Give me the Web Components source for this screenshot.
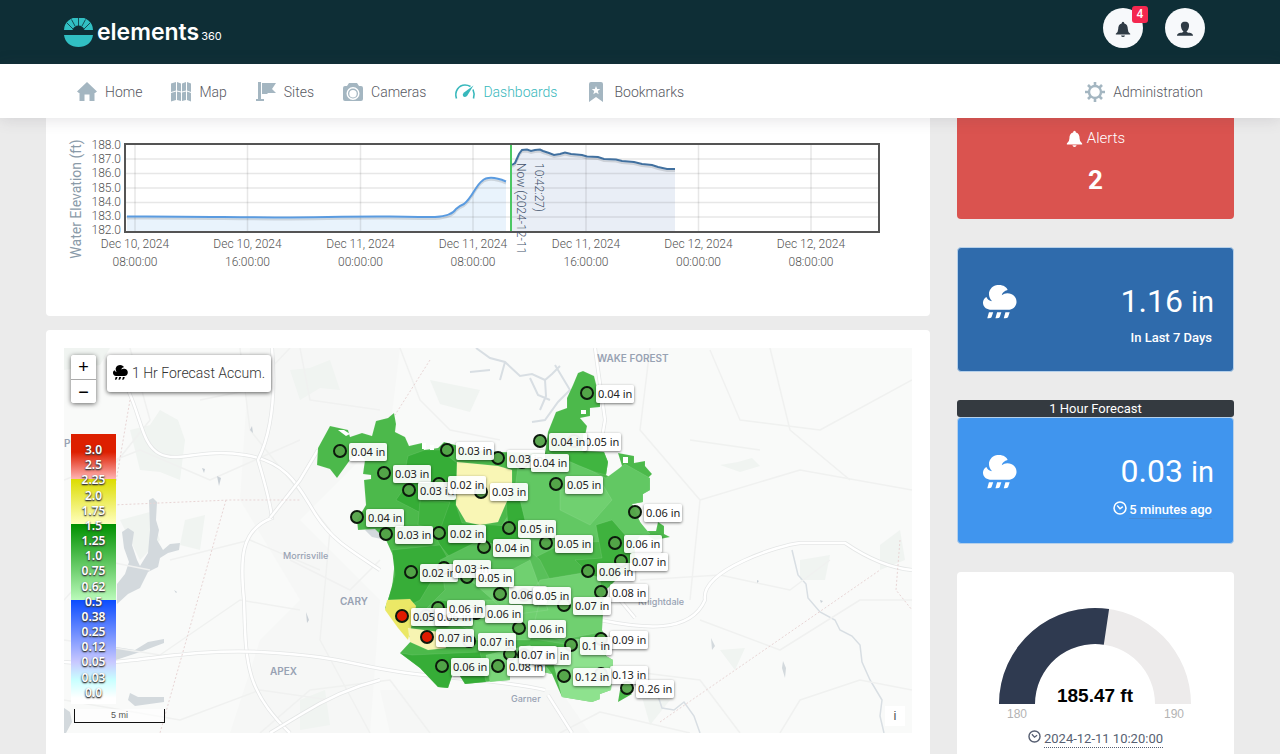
<!DOCTYPE html>
<html lang="en">
<head>
<meta charset="utf-8">
<title>elements360 – Dashboards</title>
<style>
  html, body { margin: 0; height: 100%; }
  body { background: #ebebeb; font-family: Roboto, "Liberation Sans", sans-serif; font-size: 14px; color: #575962; overflow: hidden; }
</style>
</head>
<body>
<e-app></e-app>

<script>
const ICONS = {
  home: '<path d="M10 0 20 9.500 18 11H17.500V19H12.500V12.500H7.500V19H2.500V11H2L0 9.500Z"/>',
  map: '<path d="M0 1.500 5 0V8.500L0 10ZM6 0 10 1.500V9.500L6 8.500ZM11 1.500 15 0V8.500L11 9.500ZM16 0 20 1.500V10L16 8.500ZM0 11 5 9.500V18L0 19.500ZM6 9.500 10 10.500V19L6 18ZM11 10.500 15 9.500V18L11 19ZM16 9.500 20 11V19.500L16 18Z"/>',
  flag: '<path d="M2 0H5V17H8V19H0V17H2ZM6 1H20L16 7 20 11H12L11 12H6Z"/>',
  camera: '<path fill-rule="evenodd" d="M6 1H14L16 4H18Q20 4 20 6V17Q20 19 18 19H2Q0 19 0 17V6Q0 4 2 4H4ZM10 5A6.500 6.500 0 1 0 10 18 6.500 6.500 0 1 0 10 5ZM10 6.500A5 5 0 1 1 10 16.500 5 5 0 1 1 10 6.500ZM10 8A3.700 3.700 0 1 0 10 15.400 3.700 3.700 0 1 0 10 8Z"/>',
  gauge: '<path d="M1.500 16.500C-1 9 4 3 10 3Q13 3 15.500 4.500M18 7.500Q20 12 18.500 16.500" fill="none" stroke="currentColor" stroke-width="1.600"/><path d="M18.500 3.500 12 14Q9.500 16 8 14 7 12 9 10.500Z"/>',
  bookmark: '<path fill-rule="evenodd" d="M5 0H15Q17 0 17 2V20L10 15 3 20V2Q3 0 5 0ZM10 4 8.800 7H5.700L8.200 9 7.300 12.200 10 10.400 12.700 12.200 11.800 9 14.300 7H11.200Z"/>',
  gear: '<circle cx="10" cy="10" r="6" fill="none" stroke="currentColor" stroke-width="2.400"/><path d="M10 0V4M10 16V20M0 10H4M16 10H20M3 3 5.500 5.500M14.500 14.500 17 17M17 3 14.500 5.500M5.500 14.500 3 17" stroke="currentColor" stroke-width="2.600"/>',
  bell: '<path d="M10 1Q11.500 1 11.700 3C15 4 16 6.500 16 10Q16 14 19 16V17H1V16Q4 14 4 10C4 6.500 5 4 8.300 3Q8.500 1 10 1ZM7.500 18H12.500Q12 20 10 20 8 20 7.500 18Z"/>',
  user: '<path d="M10 1C14 1 15.500 3.500 15 7 14.700 10 13 12.500 12 13 12 14 13 14.200 16 14.800 19 15.500 20 17 20 18.500H0C0 17 1 15.500 4 14.800 7 14.200 8 14 8 13 7 12.500 5.300 10 5 7 4.500 3.500 6 1 10 1Z"/>',
  rain: '<path d="M3.500 4.500C4.500 1 7 0 9.500 0 12 0 14 1.300 14.500 3 12.500 3.500 11.500 4.500 11 6Q13 4.500 15.500 5C18.500 5.500 20 8 19.700 10.500 19.300 13 17.500 14.500 15.500 14.500H4C1.500 14.300 0 12.500 0 10.500 0 9 .7 7.700 2 7Q3 9.300 5.300 9.500 3.300 7.500 3.500 4.500ZM3.500 16H6L5 19Q4.500 19.700 2.500 19.500ZM8.300 16H10.800L9.800 19Q9.300 19.700 7.300 19.500ZM13.200 16H15.700L14.700 19Q14.200 19.700 12.200 19.500Z"/>',
  clock: '<circle cx="10" cy="10" r="8.500" fill="none" stroke="currentColor" stroke-width="2.200"/><path d="M6 6.500 10 11 14 8" fill="none" stroke="currentColor" stroke-width="2"/>'
};

function define(name, css, html) {
  customElements.define(name, class extends HTMLElement {
    constructor() {
      super();
      const t = document.createElement('template');
      const markup = typeof html === 'function' ? html(this) : html;
      t.innerHTML = `<style>*{box-sizing:border-box}${css}</style>${markup}`;
      this.attachShadow({ mode: 'open' }).append(t.content.cloneNode(true));
    }
  });
}

/* ---- small parts ---- */
define('e-icon',
  `:host{display:inline-block;width:20px;height:20px;flex:none} svg{display:block;width:100%;height:100%;fill:currentColor;overflow:visible}`,
  h => `<svg viewBox="0 0 20 20" aria-hidden="true">${ICONS[h.getAttribute('name')]}</svg>`);

define('e-logo',
  `:host{display:flex;align-items:center;gap:4px;color:#fff}
   svg{width:29px;height:29px;display:block}
   a{display:flex;align-items:baseline;color:inherit;text-decoration:none;font:600 23px/32px Inter,sans-serif}
   small{font:400 11px/16px Inter,sans-serif;margin-left:2px}`,
  `<svg viewBox="0 0 29 29" aria-hidden="true"><path fill="#31bfc3" d="M0 12A14.500 13 0 0 1 29 12H20.500Q19 7.500 14.500 7.500 10 7.500 8.500 12ZM0 17H29C28 25 22 29 14.500 29 7 29 1 25 0 17Z"/><path stroke="#0e2e36" stroke-width=".8" d="M14.500 0V8M7.500 1.500 11 8M21.500 1.500 18 8M3 5 9 11M26 5 20 11"/></svg>
   <a href="#">elements<small>360</small></a>`);

define('e-round-button',
  `:host{display:block;position:relative}
   button{width:40px;height:40px;border:0;border-radius:50%;background:#f7f9fb;color:#2f3b45;padding:2px 0 0;display:grid;place-items:center}
   e-icon{width:16px;height:16px}
   .badge{position:absolute;top:-2px;right:-5px;width:16px;height:17px;border-radius:3px;background:#f4284f;color:#fff;font:500 12px/16px Roboto,sans-serif;text-align:center}`,
  h => `<button aria-label="${h.getAttribute('label')}"><e-icon name="${h.getAttribute('icon')}"></e-icon></button>${h.hasAttribute('badge') ? `<span class="badge">${h.getAttribute('badge')}</span>` : ''}`);

define('e-header',
  `:host{display:flex;flex:none;justify-content:space-between;align-items:flex-start;height:64px;background:#0e2e36;padding:8px 75px 0 64px}
   e-logo{margin-top:8px} div{display:flex;gap:22px}`,
  `<e-logo></e-logo><div><e-round-button icon="bell" label="Notifications" badge="4"></e-round-button><e-round-button icon="user" label="Account"></e-round-button></div>`);

define('e-nav-link',
  `:host{display:block;color:#a4b6c1}
   a{display:flex;align-items:center;gap:8px;color:inherit;text-decoration:none}
   span{color:#575962;font-weight:300;font-size:14px;line-height:20px}
   :host([active]),:host([active]) span{color:#38b8bc}`,
  h => `<a href="#"><e-icon name="${h.getAttribute('icon')}"></e-icon><span><slot></slot></span></a>`);

define('e-nav',
  `:host{display:flex;flex:none;align-items:center;gap:29px;height:54px;padding:2px 77px 0;background:#fff;box-shadow:0 1px 15px rgba(69,65,78,.16);position:relative;z-index:2}
   e-nav-link:last-child{margin-left:auto}`,
  `<e-nav-link icon="home">Home</e-nav-link><e-nav-link icon="map">Map</e-nav-link><e-nav-link icon="flag">Sites</e-nav-link><e-nav-link icon="camera">Cameras</e-nav-link><e-nav-link icon="gauge" active>Dashboards</e-nav-link><e-nav-link icon="bookmark">Bookmarks</e-nav-link><e-nav-link icon="gear">Administration</e-nav-link>`);

define('e-card', `:host{display:block;background:#fff;border-radius:4px;padding:18px}`, `<slot></slot>`);

/* ---- water elevation chart ---- */
define('e-chart',
  `:host{display:block} svg{display:block;width:100%;overflow:visible}
   text{font:300 12px Roboto,sans-serif;fill:#545454}
   .title{font-size:14px;font-weight:400;fill:#8a9aa8} .now{fill:#42526b}`,
  () => {
    const xs = [135, 247.5, 360.5, 473, 586, 698.5, 811];
    const days = ['10', '10', '11', '11', '11', '12', '12'];
    const hrs = ['08', '16', '00', '08', '16', '00', '08'];
    const ticks = [...Array(7)].map((_, i) => `<text x="121" y="${149 + i * 14.2}" text-anchor="end">${188 - i}.0</text>`).join('');
    const grid = xs.map(x => `<path d="M${x} 145V231"/>`).join('') + [1, 2, 3, 4, 5].map(i => `<path d="M126 ${144.5 + i * 14.5}H878"/>`).join('');
    const labels = xs.map((x, i) => `<text x="${x}" y="248" text-anchor="middle">Dec ${days[i]}, 2024</text><text x="${x}" y="266" text-anchor="middle">${hrs[i]}:00:00</text>`).join('');
    const obs = 'M127 216.500C180 216 240 217.500 290 217.500S350 216 390 216.500 420 217 435 217Q452 216 456 209 459 206 464 204C472 198 476 185 482 181Q489 174.500 506 181.500';
    const fc = 'M512 165 515 163 519 154 522 150 527 149.500 531 151 535 150 540 149.500 543 151 549 153 554 155 560 154 565 152.500 571 154 582 155 587 156.500 598 157 604 159 616 159.500 622 161 634 162 642 164 652 165 658 167 667 169H675';
    return `<svg viewBox="64 118 848 180" role="img" aria-label="Water elevation">
      <path d="${obs}V231H127Z" fill="#e9f3fc"/><path d="${fc}V231H512Z" fill="#e9eef6"/>
      <g stroke="#545454" stroke-opacity=".14" stroke-width="1.500">${grid}</g>
      <path d="${obs}" transform="translate(0 2)" fill="none" stroke="#000" stroke-opacity=".12" stroke-width="2"/>
      <path d="${obs}" fill="none" stroke="#5a9be0" stroke-width="2"/>
      <path d="${fc}" transform="translate(0 2)" fill="none" stroke="#000" stroke-opacity=".12" stroke-width="2"/>
      <path d="${fc}" fill="none" stroke="#41709f" stroke-width="2"/>
      <rect x="125" y="144" width="754" height="88" fill="none" stroke="#545454" stroke-width="2"/>
      <path d="M511 145V231" stroke="#4cc764" stroke-width="2"/>
      ${ticks}${labels}
      <text class="title" transform="translate(81 199) rotate(-90)" text-anchor="middle">Water Elevation (ft)</text>
      <text class="now" transform="translate(517 163) rotate(90)">Now (2024-12-11</text>
      <text class="now" transform="translate(535 163) rotate(90)">10:42:27)</text></svg>`;
  });

/* ---- rainfall map ---- */
/* The host makes no stacking context, so every label lies above every marker. */
define('e-pin',
  `:host{position:absolute;display:flex;align-items:center;gap:2px;height:20px;margin:-10px 0 0 -7px}
   i{width:14px;height:14px;border-radius:50%;border:2px solid #0c1a0c;background:rgba(83,163,72,.95);flex:none}
   :host([hot]) i{background:#e11b00}
   span{position:relative;z-index:1;background:rgba(255,255,255,.93);border-radius:2px;box-shadow:0 1px 3px rgba(0,0,0,.55);padding:0 2px;font:400 11px/18px "Noto Sans",sans-serif;color:#222;white-space:nowrap;margin-top:1px}`,
  `<i></i><span><slot></slot></span>`);

define('e-zoom',
  `:host{display:flex;flex-direction:column;width:25px;border-radius:3px;box-shadow:0 1px 5px rgba(0,0,0,.6);overflow:hidden;background:#fff}
   button{height:24px;border:0;padding:0;background:#fff;color:#000;font:400 18px/22px "Liberation Sans",sans-serif}
   button+button{border-top:1px solid #aaa}`,
  `<button aria-label="Zoom in">+</button><button aria-label="Zoom out">−</button>`);

define('e-legend',
  `:host{display:flex;flex-direction:column;width:45px;height:270px;padding:8px 0 4px;
     background:linear-gradient(#dd1f00 0 18px,#ffb4b4 45px,#dcdc00 45px,#ffffbe 90px,#009000 90px,#bafaba 166px,#0a4cff 166px,#c8c8ff 228px,#c8ffff 246px,#fff 264px)}
   span{flex:1;display:grid;place-items:center;font:600 12px/15px "Noto Sans",sans-serif;color:#fff;text-shadow:0 1px 2px #222,0 1px 1px #666}`,
  () => ['3.0','2.5','2.25','2.0','1.75','1.5','1.25','1.0','0.75','0.62','0.5','0.38','0.25','0.12','0.05','0.03','0.0'].map(v => `<span>${v}</span>`).join(''));

const PINS = [
  [340,451,.04],[447,450,.03],[384,473,.03],[409,490,.03],[439,484,.02],[481,492,.03],[498,458,.03],[522,462,.04],
  [357,517,.04],[386,534,.03],[439,533,.02],[587,393,.04],[574,441,.05],[540,441,.04],[556,484,.05],[635,512,.06],
  [509,528,.05],[546,543,.05],[484,547,.04],[615,543,.06],[588,571,.06],[621,561,.07],[601,592,.08],[564,605,.07],
  [500,594,.06],[524,595,.05],[411,572,.02],[444,568,.03],[467,577,.05],[402,616,.05,1],[426,616,.06],[476,613,.06],
  [438,608,.06],[427,637,.07,1],[469,641,.07],[519,628,.06],[442,666,.06],[498,666,.08],[524,655,.09],[510,654,.07],
  [601,639,.09],[571,645,.1],[601,674,.13],[564,676,.12],[627,688,.26]
];

define('e-map',
  `:host{display:block;position:relative;isolation:isolate;aspect-ratio:848/385;overflow:hidden;background:#f9faf9}
   .base{display:block;width:100%;height:100%}
   .base text{font:600 10px Inter,sans-serif;fill:#98a2b3} .base .town{font-size:9px;font-weight:500}
   .tools{position:absolute;z-index:2;left:7px;top:7px;display:flex;gap:11px;align-items:flex-start}
   .layer{display:flex;align-items:flex-start;gap:4px;background:#fff;border-radius:3px;box-shadow:0 1px 4px rgba(0,0,0,.65);padding:7px 6px;font-weight:300;font-size:14px;line-height:23px;color:#333;white-space:nowrap}
   .layer e-icon{width:15px;height:15px;color:#000;margin-top:3px}
   e-legend{position:absolute;left:7px;top:86px}
   .scale{position:absolute;left:10px;bottom:10px;width:91px;height:14px;border:1px solid #111;border-width:0 1px 1px;font:400 9px/12px "Liberation Sans",sans-serif;color:#555;text-align:center;background:rgba(255,255,255,.6)}
   .info{position:absolute;right:7px;bottom:7px;width:20px;height:20px;border:0;padding:0;background:#fff;color:#555;font:400 13px/20px "Liberation Sans",sans-serif}`,
  () => {
    const road = d => `<path d="${d}" stroke="#e4e6e6" stroke-width="4"/><path d="${d}" stroke="#fff" stroke-width="2.500"/>`;
    const minor = ['M64 480 140 450 210 480 300 440','M130 348 150 420 110 470','M240 348 250 430 330 530 320 640 370 733','M64 700 180 720 260 690 330 700','M64 640 160 655 240 600 300 610','M170 560 250 540 320 570','M650 348 640 430 700 500 690 600','M560 733 600 712 690 733','M700 500 800 470 912 490','M700 620 780 650 860 600 912 600','M710 350 740 420 820 430 912 380','M400 348 420 400 450 430 500 440','M300 348 310 400 380 410','M780 733 800 700 860 680 912 690','M260 733 310 690 390 680 430 733','M620 670 700 680 740 733','M640 580 720 575 790 590 830 560','M200 400 250 390 290 348','M64 600 100 560 150 570','M770 348 790 430 850 480','M690 440 760 450','M290 560 350 590 380 560'].map(d => `<path d="${d}"/>`).join('');
    const patches = ['M130 430 150 425 160 410 178 420 185 440 180 480 160 472 140 470Z','M120 520 150 512 160 540 140 560Z','M185 520 205 515 200 550 180 545Z','M290 370 310 368 330 360 340 390 320 388 300 400Z','M720 465 738 462 752 458 760 466 740 472Z','M720 650 745 648 735 670Z','M880 545 900 530 905 560 880 570Z','M300 700 325 690 330 725 300 730Z','M64 348 110 348 100 365 64 370Z','M430 380 480 390 470 412 440 404Z','M640 690 670 700 650 725Z','M800 560 830 555 825 580 800 580Z'].map(d => `<path d="${d}"/>`).join('');
    return `<svg class="base" viewBox="64 348 848 385" preserveAspectRatio="xMinYMin slice" role="img" aria-label="Rainfall map">
      <path fill="#f6f7f6" d="M250 348H400L390 430 300 520 380 600 370 733H230L260 640 300 600 240 500ZM380 690H560L590 733H390Z"/>
      <g fill="#f0f4f1">${patches}</g>
      <g fill="#d3d9dd"><path d="M149 500 153 498 157 502 156 520 159 530 157 540 163 550 170 544 180 543 179 550 168 553 160 558 158 567 148 572 140 588 128 594 117 604V584L125 574 129 562 124 548 122 532 128 528 134 532 132 545 137 560 140 566 148 553 150 530Z"/><path d="M116 647 135 650 148 642 164 639 164 643 140 652 116 660ZM128 700 130 693 138 697 164 697 164 702 135 706ZM64 708 70 712 72 722 66 733H64Z"/><path d="M382 520 389 528 386 540 372 537 365 530ZM711 638 715 646 712 650ZM783 661 786 668 785 678 782 668Z"/></g>
      <g fill="none" stroke="#d8dee3" stroke-width="2"><path d="M476 348 490 358 505 362 520 376 532 374 545 380 552 374 560 366M505 362 500 380M530 378 538 395 550 400M545 380 546 396 540 410M555 365 570 390 558 402 545 420 532 422M470 372 490 370"/><path stroke-width="1.500" d="M792 550 798 575 806 584 808 598 820 612 835 620 840 630 852 636 860 645 862 662 870 680 882 700 880 716 884 733M656 690 662 708 674 710 684 702 694 716 700 733"/></g>
      <g fill="none" stroke="#f0f1f0" stroke-width="1.500" stroke-linejoin="round">${minor}</g>
      <g fill="none">${road('M128 390C142 420 142 445 160 454S200 448 245 455 300 490 316 515 350 550 380 570')}${road('M272 348Q278 420 258 460 270 500 272 518C240 530 240 560 244 600 246 660 244 690 290 733')}${road('M64 662C120 668 180 648 260 652S350 665 400 672 500 680 545 690')}${road('M600 620C640 628 690 635 705 600 700 570 780 545 800 543H845C870 560 890 568 912 570')}${road('M380 680Q340 690 300 715L270 733')}${road('M548 695 572 733M620 600 635 618')}${road('M318 450 300 480 270 518')}${road('M595 348 605 420 600 450')}</g>
      <g fill="none" stroke="#e8d5d5" stroke-dasharray="2 2"><path d="M130 400 112 505 230 500H300M226 500 160 733M430 360 395 415M660 722 880 570M900 540 896 590 912 610"/></g>
      <g fill="#c9d0d6"><path d="M202 468l3 1-1 4zM217 476l4 2-2 8zM250 430l2-4 1 7zM306 612l3 8-2 3zM820 600l3 1-2 2zM783 640l2 3zM757 580l2 1-2 2zM174 590l3 2-1 1z"/></g>
      <text x="597" y="362">WAKE FOREST</text><text x="340" y="605">CARY</text><text x="270" y="675">APEX</text><text class="town" x="283" y="559">Morrisville</text><text class="town" x="638" y="605">Knightdale</text><text class="town" x="511" y="702">Garner</text><text x="64" y="447">PI</text>
      <g stroke="#fff" stroke-opacity=".12" stroke-width=".8">
      <path fill="#4cb94b" d="M330 426 348 430 350 437 362 433 372 436 376 421 388 418 394 413 396 424 395 432 405 437 409 446 422 443 424 450 438 448 444 442 470 449 498 452 545 453 548 432 556 412 567 408 567 398 573 385 578 373 583 371 594 376 600 400 600 407 590 408 590 416 580 418 587 426 582 451 604 452 608 462 606 475 612 478 622 466 618 453 634 456 634 463 645 461 645 466 652 474 648 478 650 490 643 494 643 502 632 504 640 522 646 531 656 531 658 522 664 526 664 534 670 537 655 540 648 536 640 536 632 548 638 565 620 576 604 592 602 630 608 645 606 656 613 660 611 690 600 694 600 699 592 702 562 697 552 674 525 668 510 672 510 680 484 682 465 684 460 676 452 676 448 688 438 687 420 668 400 653 412 640 395 620 385 608 392 588 395 560 386 540 375 529 358 530 357 520 366 505 364 480 371 479 371 475 363 474 365 460 358 452 350 460 337 478 330 469 317 465 318 448Z"/>
      <path fill="#62c863" d="M518 466 560 455 606 478 625 464 650 478 650 490 643 494 643 502 632 504 640 522 650 534 615 540 560 545 530 560 504 550 500 528 512 510Z"/>
      <path fill="#36ad37" d="M408 456 425 450 440 450 457 463 456 505 462 523 508 526 506 500 512 490 520 500 526 525 512 560 460 570 440 545 425 515 396 500 410 480 406 466Z"/>
      <path fill="#37ad38" d="M392 550 440 545 450 562 432 580 420 600 400 610 388 600 395 575Z"/>
      <path fill="#59c05a" d="M440 560 480 540 500 546 520 542 540 560 560 600 600 610 600 650 540 640 470 630 425 610 445 590Z"/>
      <path fill="#70d070" d="M540 580 600 570 602 632 560 640 510 625ZM470 580 500 576 530 560 548 610 510 615ZM560 490 580 488 600 480 612 500 590 525 560 510ZM480 600 540 600 530 640 470 640Z"/>
      <path fill="#3fb23e" d="M596 525 612 520 625 535 635 550 636 567 610 580 590 575 575 560 602 558ZM440 600 478 606 470 625 440 622ZM420 500 450 502 440 530 418 525Z"/>
      <path fill="#8ee28e" d="M550 650 600 648 606 656 613 660 611 690 600 694 600 699 592 702 562 697ZM570 640 605 636 610 650 575 650Z"/>
      <path fill="#36ad37" d="M412 655 480 652 486 682 465 684 460 676 452 676 448 688 438 687 420 668 400 653Z"/>
      <path fill="#7ad67a" d="M486 655 530 645 552 674 525 668 510 672 510 680 490 682Z"/>
      <path fill="#40b540" d="M548 452 580 435 582 451 604 452 608 462 606 475 595 472 580 466Z"/>
      <path fill="#f9f6b5" d="M457 462 498 466 512 470 512 490 504 508 498 522 480 525 466 522 456 505Z"/>
      <path fill="#ebe866" d="M387 600 410 599 416 606 408 640 398 628 385 610Z"/>
      <path fill="#f7f4b2" d="M408 628 440 632 446 648 428 650 410 642Z"/></g>
      <path fill="#4cb94b" d="M620 690 632 694 618 702Z"/>
      <path fill="#fff" d="M581 410H586V414H581ZM623 457H628V463H623ZM338 430H344L350 434 346 436ZM422 443H426V449H422ZM430 445H434V450H430Z"/>
    </svg>
    ${PINS.map(([x, y, v, hot]) => `<e-pin ${hot ? 'hot' : ''} style="left:${(x - 64) / 8.48}%;top:${(y - 348) / 3.85}%">${v} in</e-pin>`).join('')}
    <div class="tools"><e-zoom></e-zoom><div class="layer"><e-icon name="rain"></e-icon>1 Hr Forecast Accum.</div></div>
    <e-legend></e-legend><div class="scale">5 mi</div><button class="info" aria-label="Attribution">i</button>`;
  });

/* ---- side tiles ---- */
define('e-alerts',
  `:host{display:flex;flex-direction:column;align-items:center;gap:15px;background:#da534f;color:#fff;border-radius:0 0 4px 4px;padding:10px 0 22px}
   div{display:flex;align-items:center;gap:4px;font-weight:300;font-size:15px;line-height:20px} e-icon{width:17px;height:17px}
   strong{font-size:26px;line-height:34px;font-weight:700}`,
  `<div><e-icon name="bell"></e-icon>Alerts</div><strong>2</strong>`);

define('e-rain-tile',
  `:host{display:block}
   h3{margin:0;border-radius:3px;background:#343a40;color:#fff;font-size:13px;font-weight:400;line-height:17px;text-align:center}
   section{display:grid;grid-template-columns:auto 1fr;align-items:center;background:#2f6bac;border:1px solid #b5d0ea;border-radius:4px;color:#fff;padding:33px 19px 24px 25px;row-gap:6px}
   :host([light]) section{background:#4095ee;row-gap:8px}
   e-icon.big{width:34px;height:34px}
   .value{text-align:right;font-size:32px;line-height:40px;font-weight:400}
   .unit{font-size:29px}
   .note{grid-column:1/-1;text-align:right;font-size:13px;line-height:19px;font-weight:500;padding-right:2px}
   :host([light]) .note{display:flex;justify-content:flex-end;gap:2px}
   :host([light]) .note span{box-shadow:inset 0 -1px #4b8ad0}
   .note e-icon{width:14px;height:14px;margin-top:1px}`,
  h => `${h.hasAttribute('heading') ? `<h3>${h.getAttribute('heading')}</h3>` : ''}<section><e-icon class="big" name="rain"></e-icon><div class="value">${h.getAttribute('value')} <span class="unit">in</span></div><div class="note">${h.hasAttribute('light') ? '<e-icon name="clock"></e-icon>' : ''}<span><slot></slot></span></div></section>`);

define('e-gauge',
  `:host{display:block;background:#fff;border-radius:4px;padding:24px 0 40px}
   svg{display:block;width:100%} text{font:400 12px "Liberation Sans",sans-serif;fill:#b3b3b3;text-anchor:middle} text.v{font-size:19px;font-weight:700;fill:#010101}
   div{display:flex;justify-content:center;gap:3px;font-size:13px;line-height:17px;margin-top:8px;color:#575f72}
   e-icon{width:13px;height:13px} span{border-bottom:1px dotted #575f72}`,
  `<svg viewBox="0 0 277 126" role="img" aria-label="Water level gauge"><path fill="#edebeb" d="M42 108A96 96 0 0 1 234 108H198A60 60 0 0 0 78 108Z"/><path fill="#2f3a50" d="M42 108A96 96 0 0 1 152.100 13L146.800 48.700A60 60 0 0 0 78 108Z"/><text class="v" x="138" y="106">185.47 ft</text><text x="60" y="122">180</text><text x="217" y="122">190</text></svg>
   <div><e-icon name="clock"></e-icon><span>2024-12-11 10:20:00</span></div>`);

define('e-app',
  `:host{display:flex;flex-direction:column;height:100vh}
   main{flex:1;min-height:0;overflow:hidden;display:grid;grid-template-columns:minmax(0,884fr) minmax(0,277fr);column-gap:27px;padding:0 46px;align-items:start}
   .col{display:flex;flex-direction:column;gap:14px} .side{gap:28px}
   e-card.chart{border-radius:0 0 4px 4px;padding-top:0}
   e-card.rain{padding-bottom:40px}`,
  `<e-header></e-header><e-nav></e-nav>
   <main><div class="col"><e-card class="chart"><e-chart></e-chart></e-card><e-card class="rain"><e-map></e-map></e-card></div>
   <div class="col side"><e-alerts></e-alerts><e-rain-tile value="1.16">In Last 7 Days</e-rain-tile><e-rain-tile light heading="1 Hour Forecast" value="0.03">5 minutes ago</e-rain-tile><e-gauge></e-gauge></div></main>`);
</script>
</body>
</html>
